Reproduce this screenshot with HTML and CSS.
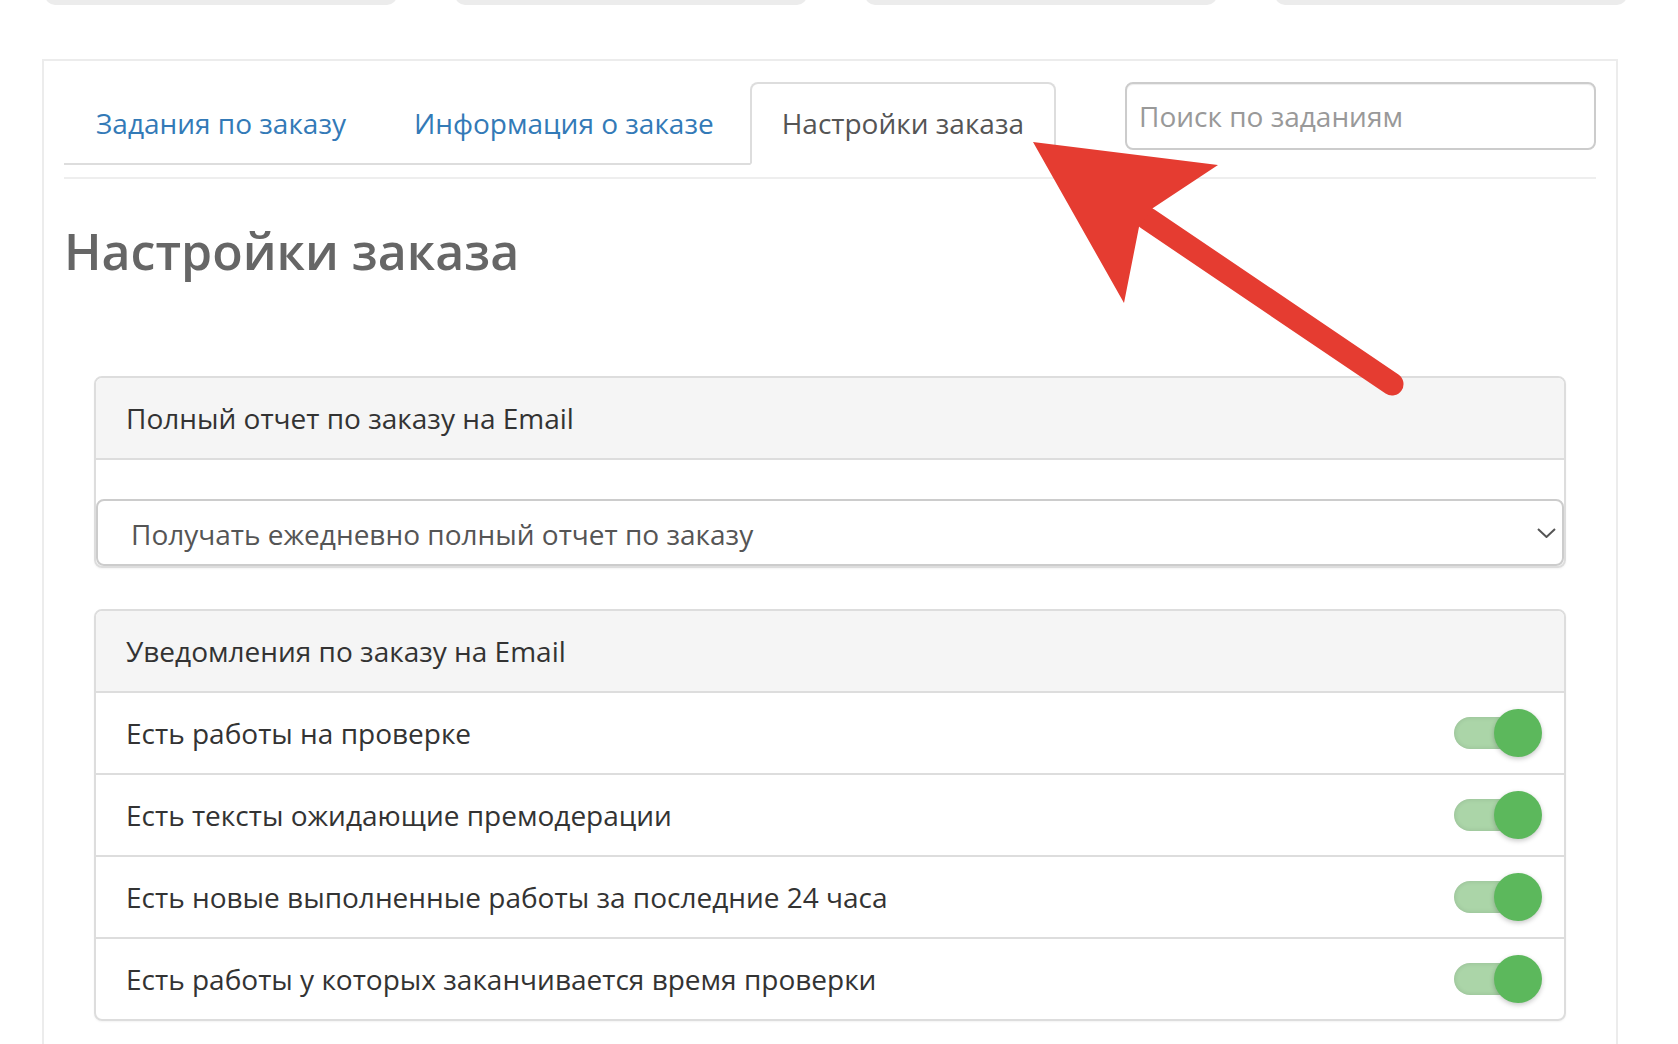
FILE: index.html
```html
<!DOCTYPE html>
<html lang="ru">
<head>
<meta charset="utf-8">
<title>Настройки заказа</title>
<link rel="stylesheet" href="styles.css">
</head>
<body>
<div class="topbar">
  <div class="topcard"></div>
  <div class="topcard"></div>
  <div class="topcard"></div>
  <div class="topcard"></div>
</div>

<div class="panel">
  <div class="tabrow">
    <ul class="tabs">
      <li><a class="tab">Задания по заказу</a></li>
      <li><a class="tab">Информация о заказе</a></li>
      <li><a class="tab active">Настройки заказа</a></li>
    </ul>
    <input class="search" type="text" placeholder="Поиск по заданиям">
  </div>
  <div class="sep"></div>

  <h3 class="title">Настройки заказа</h3>

  <div class="card">
    <div class="card-head">Полный отчет по заказу на Email</div>
    <div class="card-body">
      <div class="select">
        <span>Получать ежедневно полный отчет по заказу</span>
        <svg class="chev" width="19" height="10" viewBox="0 0 19 10"><polyline points="1,1 9.5,9 18,1" fill="none" stroke="#555" stroke-width="2"/></svg>
      </div>
    </div>
  </div>

  <div class="card card2">
    <div class="card-head">Уведомления по заказу на Email</div>
    <div class="row"><span>Есть работы на проверке</span><div class="toggle"><div class="track"></div><div class="knob"></div></div></div>
    <div class="row"><span>Есть тексты ожидающие премодерации</span><div class="toggle"><div class="track"></div><div class="knob"></div></div></div>
    <div class="row"><span>Есть новые выполненные работы за последние 24 часа</span><div class="toggle"><div class="track"></div><div class="knob"></div></div></div>
    <div class="row last"><span>Есть работы у которых заканчивается время проверки</span><div class="toggle"><div class="track"></div><div class="knob"></div></div></div>
  </div>
</div>

<svg class="arrow" width="1678" height="1044" viewBox="0 0 1678 1044">
  <line x1="1148" y1="219" x2="1392" y2="384" stroke="#e53c31" stroke-width="23" stroke-linecap="round"/>
  <polygon points="1033,142 1218,165 1153,208 1139,227 1124,303" fill="#e53c31"/>
</svg>
</body>
</html>
```

FILE: styles.css
```css
* { box-sizing: border-box; }
html, body { margin: 0; padding: 0; background: #fff; }
body {
  font-family: "Open Sans", "Noto Sans", sans-serif;
  color: #333;
  position: relative;
  width: 1678px;
  height: 1044px;
  overflow: hidden;
}

.topbar {
  display: flex;
  gap: 58px;
  padding-left: 45px;
  height: 5px;
}
.topcard {
  width: 352px;
  height: 30px;
  margin-top: -25px;
  background: #ececec;
  border-radius: 10px;
}

.panel {
  margin: 54px 0 0 42px;
  width: 1576px;
  border: 2px solid #ececec;
  border-bottom: none;
  padding: 21px 20px 80px;
}

.tabrow {
  display: flex;
  align-items: flex-start;
}
.tabs {
  display: flex;
  list-style: none;
  margin: 0;
  padding: 0;
  border-bottom: 2px solid #ddd;
}
.tabs li {
  margin: 0 4px -2px 0;
}
.tab {
  display: block;
  padding: 20px 30px;
  border: 2px solid transparent;
  border-radius: 8px 8px 0 0;
  font-size: 28px;
  line-height: 39px;
  color: #337ab7;
}
.tab.active {
  border-color: #ddd #ddd transparent;
  background: #fff;
  color: #555;
}
.search {
  margin-left: auto;
  width: 471px;
  height: 68px;
  border: 2px solid #ccc;
  border-radius: 8px;
  padding: 0 12px;
  font-family: "Open Sans", sans-serif;
  font-size: 28px;
  color: #555;
  box-shadow: inset 0 1px 1px rgba(0,0,0,.075);
  outline: none;
}
.search::placeholder { color: #999; }

.sep {
  margin-top: 12px;
  border-top: 2px solid #eee;
}

.title {
  margin: 46px 0 98px;
  font-size: 50px;
  line-height: 53px;
  font-weight: 600;
  color: #666;
}

.card {
  margin: 0 30px 0 30px;
  border: 2px solid #ddd;
  border-radius: 8px;
  overflow: hidden;
  box-shadow: 0 1px 2px rgba(0,0,0,.05);
}
.card2 { margin-top: 41px; }
.card-head {
  background: #f5f5f5;
  border-bottom: 2px solid #ddd;
  padding: 20px 30px;
  font-size: 28px;
  line-height: 40px;
  color: #333;
}
.card-body {
  padding-top: 39px;
}
.select {
  display: flex;
  align-items: center;
  justify-content: space-between;
  height: 67px;
  border: 2px solid #ccc;
  border-radius: 8px;
  padding: 2px 6px 0 33px;
  font-size: 28px;
  color: #555;
  box-shadow: 0 2px 2px rgba(0,0,0,.06);
}
.chev { display: block; margin-top: -2px; }

.row {
  display: flex;
  align-items: center;
  justify-content: space-between;
  padding: 20px 22px 20px 30px;
  border-bottom: 2px solid #ddd;
  font-size: 28px;
  line-height: 40px;
  color: #333;
}
.row.last { border-bottom: none; }
.toggle {
  position: relative;
  width: 88px;
  height: 48px;
  margin: -4px 0;
}
.track {
  position: absolute;
  left: 0;
  top: 8px;
  width: 72px;
  height: 32px;
  border-radius: 16px;
  background: #abd5a8;
  box-shadow: inset 0 0 5px rgba(0,0,0,.12);
}
.knob {
  position: absolute;
  right: 0;
  top: 0;
  width: 48px;
  height: 48px;
  border-radius: 50%;
  background: #5cb85c;
  box-shadow: 0 2px 5px rgba(0,0,0,.22);
}

.arrow {
  position: absolute;
  left: 0;
  top: 0;
  pointer-events: none;
}
```
